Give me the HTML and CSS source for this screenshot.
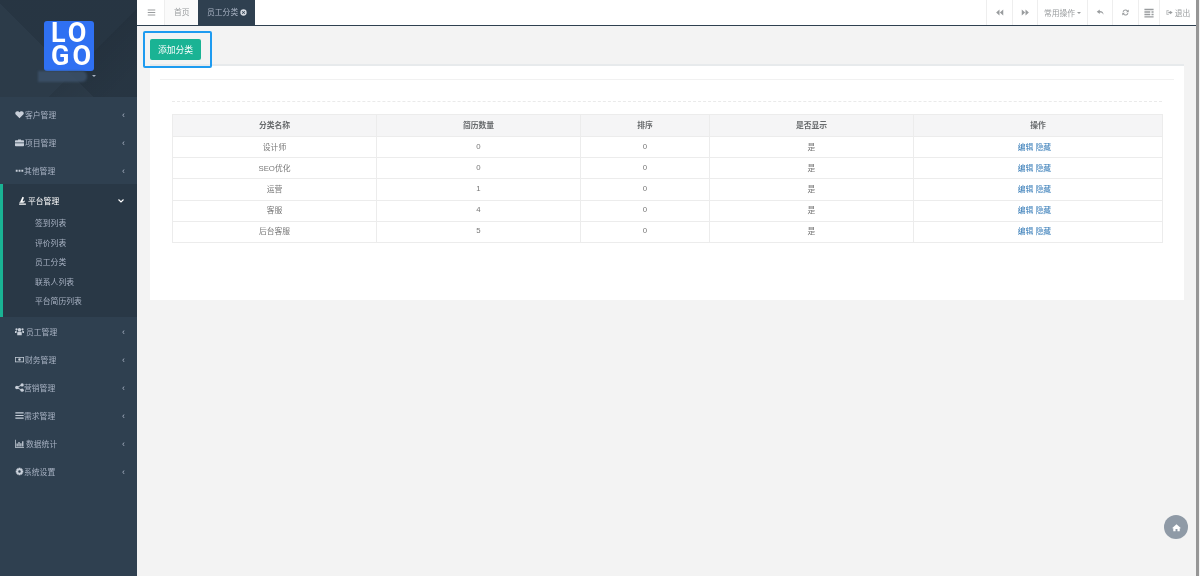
FILE: index.html
```html
<!DOCTYPE html>
<html lang="zh-CN">
<head>
<meta charset="utf-8">
<title>员工分类</title>
<link rel="stylesheet" href="styles.css">
</head>
<body>
<svg class="defs" width="0" height="0" aria-hidden="true">
  <symbol id="i-heart" viewBox="0 0 12 12"><path d="M6 11 1 6C-.5 4 .8 1.500 3.300 1.500 4.500 1.500 5.500 2.200 6 3c.5-.8 1.500-1.500 2.700-1.500C11.200 1.500 12.500 4 11 6z"/></symbol>
  <symbol id="i-case" viewBox="0 0 12 12"><path d="M4 3V2h4v1h3a1 1 0 0 1 1 1v2H0V4a1 1 0 0 1 1-1zM0 7h12v3a1 1 0 0 1-1 1H1a1 1 0 0 1-1-1z"/></symbol>
  <symbol id="i-dots" viewBox="0 0 12 12"><path d="M1 5h2.500v2.500H1zM4.800 5h2.500v2.500H4.800zM8.500 5H11v2.500H8.500z"/></symbol>
  <symbol id="i-flask" viewBox="0 0 12 12"><path d="M6 1l2 1-2 5c1 .3 2-.2 2.300-1.500C9.800 7 8.500 9 6.500 9H2V8l1-.5zM1.500 10h9v1.500h-9z"/></symbol>
  <symbol id="i-users" viewBox="0 0 12 12"><circle cx="6" cy="3.500" r="2.300"/><circle cx="2" cy="3" r="1.500"/><circle cx="10" cy="3" r="1.500"/><path d="M3 11V7.500C3 6.500 4 6 6 6s3 .5 3 1.500V11zM0 8V6c0-.8 1-1 2.500-1L2 8zM12 8V6c0-.8-1-1-2.500-1l.5 3z"/></symbol>
  <symbol id="i-money" viewBox="0 0 12 12"><path fill-rule="evenodd" d="M0 2.500h12v7H0zM1 3.500v5h10v-5zM6 4.300a1.700 1.700 0 1 1 0 3.400 1.700 1.700 0 0 1 0-3.400z"/></symbol>
  <symbol id="i-share" viewBox="0 0 12 12"><circle cx="2.500" cy="6" r="2.300"/><circle cx="9.500" cy="2.500" r="2.200"/><circle cx="9.500" cy="9.500" r="2.200"/><path d="M2 5.500 9 2l.5 1-7 3.500zM2 6.500 9 10l.5-1-7-3.500z"/></symbol>
  <symbol id="i-bars" viewBox="0 0 12 12"><path d="M.5 1.800h11v1.600H.5zM.5 5.200h11v1.600H.5zM.5 8.600h11v1.600H.5z"/></symbol>
  <symbol id="i-chart" viewBox="0 0 12 12"><path d="M0 1h1v9.500h11V11.500H0zM2 6h1.700v4H2zM4.500 4h1.700v6H4.500zM7 5.500h1.700V10H7zM9.500 3h1.700v7H9.500z"/></symbol>
  <symbol id="i-gear" viewBox="0 0 12 12"><path fill-rule="evenodd" d="M4.800 1h2.400l.3 1.400 1.300-.7 1.500 1.500-.7 1.300 1.400.3v2.400l-1.400.3.700 1.300-1.500 1.500-1.300-.7-.3 1.400H4.800l-.3-1.400-1.300.7-1.500-1.500.7-1.300L1 7.200V4.800l1.400-.3-.7-1.300 1.500-1.500 1.300.7zM6 4.300a1.700 1.700 0 1 0 0 3.400 1.700 1.700 0 0 0 0-3.400z"/></symbol>
  <symbol id="i-home" viewBox="0 0 12 12"><path d="M6 1.500 12 7h-1.700v4H7.300V8H4.700v3H1.700V7H0z"/></symbol>
</svg>

<aside class="sidebar">
  <div class="brand">
    <div class="logo"><span class="logo-text">LOGO</span></div>
    <div class="brand-name"><i></i><i></i><i></i><i></i></div>
    <b class="caret"></b>
  </div>
  <nav class="menu">
    <a class="item"><svg class="ic gap1"><use href="#i-heart"/></svg><span class="lbl">客户管理</span><em class="arr">‹</em></a>
    <a class="item"><svg class="ic gap1"><use href="#i-case"/></svg><span class="lbl">项目管理</span><em class="arr">‹</em></a>
    <a class="item"><svg class="ic"><use href="#i-dots"/></svg><span class="lbl">其他管理</span><em class="arr">‹</em></a>
    <div class="group">
      <a class="item active"><svg class="ic"><use href="#i-flask"/></svg><span class="lbl">平台管理</span><svg class="chev" viewBox="0 0 6 4"><path d="M.5.500 3 3 5.500.5" fill="none" stroke="#fff" stroke-width="1.100"/></svg></a>
      <a class="sub">签到列表</a>
      <a class="sub">评价列表</a>
      <a class="sub">员工分类</a>
      <a class="sub">联系人列表</a>
      <a class="sub">平台简历列表</a>
    </div>
    <a class="item"><svg class="ic gap2"><use href="#i-users"/></svg><span class="lbl">员工管理</span><em class="arr">‹</em></a>
    <a class="item"><svg class="ic gap1"><use href="#i-money"/></svg><span class="lbl">财务管理</span><em class="arr">‹</em></a>
    <a class="item"><svg class="ic"><use href="#i-share"/></svg><span class="lbl">营销管理</span><em class="arr">‹</em></a>
    <a class="item"><svg class="ic"><use href="#i-bars"/></svg><span class="lbl">需求管理</span><em class="arr">‹</em></a>
    <a class="item"><svg class="ic gap2"><use href="#i-chart"/></svg><span class="lbl">数据统计</span><em class="arr">‹</em></a>
    <a class="item"><svg class="ic"><use href="#i-gear"/></svg><span class="lbl">系统设置</span><em class="arr">‹</em></a>
  </nav>
</aside>

<main class="main">
  <header class="topbar">
    <button class="tool burger"><svg class="tic" viewBox="0 0 12 12"><path d="M1 2h10v1.200H1zM1 5.400h10v1.200H1zM1 8.800h10V10H1z"/></svg></button>
    <a class="tab">首页</a>
    <a class="tab current">员工分类<svg class="close" viewBox="0 0 10 10"><path fill-rule="evenodd" d="M5 .5a4.500 4.500 0 1 1 0 9 4.500 4.500 0 0 1 0-9zM3.500 2.700 2.700 3.500 4.200 5 2.700 6.500l.8.8L5 5.800l1.500 1.500.8-.8L5.800 5l1.500-1.500-.8-.8L5 4.200z"/></svg></a>
    <div class="spacer"></div>
    <button class="tool w26"><svg class="tic" viewBox="0 0 12 12"><path d="M6 2v8L1.500 6zM11 2v8L6.500 6z"/></svg></button>
    <button class="tool w25"><svg class="tic" viewBox="0 0 12 12"><path d="M1 2v8l4.500-4zM6 2v8l4.500-4z"/></svg></button>
    <button class="tool w50">常用操作<b class="mini-caret"></b></button>
    <button class="tool w25"><svg class="tic" viewBox="0 0 12 12"><path d="M5 2 1 5l4 3V6c2.500 0 4 .8 5 3 0-3-1.500-5-5-5z"/></svg></button>
    <button class="tool w26"><svg class="tic" viewBox="0 0 12 12"><path d="M6 2a4 4 0 0 1 3 1.300L10.300 2v3.700H6.700L8.100 4.300A2.700 2.700 0 0 0 3.400 5.300L2.100 5A4 4 0 0 1 6 2zM1.700 6.300h3.600L3.900 7.700a2.700 2.700 0 0 0 4.700-1l1.300.3A4 4 0 0 1 3 8.700L1.700 10z"/></svg></button>
    <button class="tool w21"><svg class="tic wide" viewBox="0 0 12 12"><path d="M.5 1h11v1.700H.5zM.5 4h7v1.700h-7zM9 4h2.500v1.700H9zM.5 7h7v1.700h-7zM9 7h2.500v1.700H9zM.5 10h11v1.500H.5z"/></svg></button>
    <button class="tool w37"><svg class="tic small" viewBox="0 0 12 12"><path d="M1 2h4v1.200H2.200v5.600H5V10H1zM7 3l4.500 3L7 9V7.300H4V4.700h3z"/></svg>退出</button>
  </header>

  <section class="content">
    <div class="actions">
      <button class="btn-add">添加分类</button>
      <span class="highlight"></span>
    </div>
    <div class="panel">
      <div class="rule-solid"></div>
      <div class="rule-dashed"></div>
      <table class="grid">
        <colgroup><col class="c1"><col class="c2"><col class="c3"><col class="c4"><col class="c5"></colgroup>
        <thead><tr><th>分类名称</th><th>简历数量</th><th>排序</th><th>是否显示</th><th>操作</th></tr></thead>
        <tbody>
          <tr><td>设计师</td><td>0</td><td>0</td><td>是</td><td class="ops"><a>编辑</a> <a>隐藏</a></td></tr>
          <tr><td>SEO优化</td><td>0</td><td>0</td><td>是</td><td class="ops"><a>编辑</a> <a>隐藏</a></td></tr>
          <tr><td>运营</td><td>1</td><td>0</td><td>是</td><td class="ops"><a>编辑</a> <a>隐藏</a></td></tr>
          <tr><td>客服</td><td>4</td><td>0</td><td>是</td><td class="ops"><a>编辑</a> <a>隐藏</a></td></tr>
          <tr><td>后台客服</td><td>5</td><td>0</td><td>是</td><td class="ops"><a>编辑</a> <a>隐藏</a></td></tr>
        </tbody>
      </table>
    </div>
    <a class="home-fab"><svg viewBox="0 0 12 12"><use href="#i-home"/></svg></a>
  </section>
</main>
<div class="rail"></div>
</body>
</html>
```

FILE: styles.css
```css
* { box-sizing: border-box; }
html, body { height: 100%; }
body {
  margin: 0;
  display: flex;
  height: 576px;
  overflow: hidden;
  background: #f3f3f3;
  font-family: "Liberation Sans", "Noto Sans CJK SC", sans-serif;
  font-size: 7.8px;
  color: #676a6c;
}
.defs { position: absolute; }
.sidebar, .main { filter: blur(.3px); }

/* sidebar */
.sidebar { width: 137px; flex: none; background: #2f4050; }
.brand {
  height: 97px;
  position: relative;
  padding: 21px 0 0 44px;
  background:
    linear-gradient(135deg, rgba(0,0,0,0) 62%, rgba(0,0,0,.07) 62%, rgba(0,0,0,0) 90%),
    linear-gradient(45deg, rgba(255,255,255,.015) 40%, rgba(0,0,0,.05) 40%),
    #293846;
}
.logo {
  width: 50px;
  height: 50px;
  border-radius: 3px;
  background: #2f70f2;
  padding: 1px 0 0 7px;
}
.logo-text {
  display: block;
  width: 47px;
  color: #fff;
  font: 700 27px/23px Roboto, "Liberation Sans", sans-serif;
  letter-spacing: 3px;
  word-break: break-all;
}
.brand-name {
  position: absolute;
  left: 38px;
  top: 71px;
  display: flex;
  height: 11px;
  filter: blur(1px);
}
.brand-name i { width: 12px; height: 11px; background: #3c5168; opacity: .85; }
.brand-name i:last-of-type { width: 13px; border-radius: 0 5px 5px 0; }
.caret {
  position: absolute;
  left: 92px;
  top: 75px;
  border: 2.5px solid transparent;
  border-top-color: #a7b1c2;
}
.menu { padding-top: 3px; }
.item {
  height: 28px;
  display: flex;
  align-items: center;
  padding: 0 12px 0 15px;
  color: #a7b1c2;
}
.ic { width: 9px; height: 9px; fill: #c8cfd9; flex: none; }
.gap1 { margin-right: 1px; }
.gap2 { margin-right: 2px; }
.lbl { flex: 1; white-space: nowrap; }
.arr { font-style: normal; font-size: 9px; line-height: 9px; color: #a7b1c2; padding-top: 3px; }
.group {
  height: 133px;
  padding-top: 2px;
  background: #293846;
  border-left: 3px solid #1ab394;
}
.item.active { color: #fff; padding-left: 15px; }
.item.active .ic { fill: #fff; margin-right: 1px; }
.chev { width: 6px; height: 4px; margin: 1px 1px 0 0; }
.sub {
  display: block;
  height: 19.5px;
  line-height: 19.5px;
  padding-left: 32px;
  color: #a7b1c2;
  white-space: nowrap;
}

/* main */
.main { flex: 1; min-width: 0; display: flex; flex-direction: column; position: relative; }
.topbar {
  height: 26px;
  flex: none;
  display: flex;
  background: #fff;
  border-bottom: 1px solid #2f4050;
  padding-left: 1px;
}
.spacer { flex: 1; }
.tool {
  border: 0;
  border-left: 1px solid #eee;
  background: #fff;
  padding: 0;
  height: 25px;
  display: flex;
  align-items: center;
  justify-content: center;
  font: 7.8px "Liberation Sans", "Noto Sans CJK SC", sans-serif;
  color: #999c9e;
  white-space: nowrap;
}
.burger { width: 26px; border-left: 0; }
.tab {
  height: 25px;
  line-height: 25px;
  padding: 0 9px;
  width: 34px;
  background: #fafafa;
  border-left: 1px solid #eee;
  color: #999c9e;
  white-space: nowrap;
}
.tab.current {
  width: 57px;
  background: #2f4050;
  color: #a7b1c2;
  border-left: 0;
  display: flex;
  align-items: center;
}
.close { width: 7px; height: 7px; fill: #d4d9e0; margin-left: 2px; flex: none; }
.tic { width: 9px; height: 9px; fill: #999c9e; }
.tic.wide { width: 10px; height: 10px; }
.tic.small { width: 7px; height: 7px; margin-right: 2px; }
.w21 { width: 21px; }
.w25 { width: 25px; }
.w26 { width: 26px; }
.w37 { width: 37px; }
.w50 { width: 50px; }
.mini-caret {
  border: 2px solid transparent;
  border-top-color: #999c9e;
  margin: 2px 0 0 2px;
}

.content { flex: 1; position: relative; padding: 13px 12px 0 13px; }
.actions { position: relative; height: 25px; }
.btn-add {
  display: block;
  width: 51px;
  height: 21px;
  border: 0;
  border-radius: 2px;
  background: #1ab394;
  color: #fff;
  font: 8.8px "Liberation Sans", "Noto Sans CJK SC", sans-serif;
  padding: 0;
}
.highlight {
  position: absolute;
  left: -7px;
  top: -8px;
  width: 69px;
  height: 37px;
  border: 2px solid #1e9bf0;
  border-radius: 2px;
}
.panel {
  height: 236px;
  background: #fff;
  border-top: 2px solid #e7eaec;
  padding: 13px 22px 0 22px;
}
.rule-solid { height: 1px; background: #f1f1f1; margin: 0 -12px; }
.rule-dashed { height: 0; border-top: 1px dashed #eaeaea; margin-top: 21px; }
.grid {
  width: 990px;
  margin-top: 12px;
  table-layout: fixed;
  border-collapse: collapse;
  text-align: center;
}
.c1, .c2, .c4 { width: 204px; }
.c3 { width: 129px; }
.c5 { width: 249px; }
.grid th, .grid td { border: 1px solid #ececec; padding: 0 0 2px; }
.grid th { height: 22px; background: #f5f5f6; font-weight: 700; color: #676a6c; padding-bottom: 3px; }
.grid td { height: 21.2px; color: #777; }
.grid td.ops { padding-right: 7px; }
.grid td a { color: #337ab7; }
.home-fab {
  position: absolute;
  right: 8px;
  top: 489px;
  width: 24px;
  height: 24px;
  border-radius: 50%;
  background: #8f9aa6;
  display: flex;
  align-items: center;
  justify-content: center;
}
.home-fab svg { width: 9px; height: 9px; fill: #fff; }
.rail { width: 4px; flex: none; background: #f3f3f3; position: relative; }
.rail::before { content: ""; position: absolute; left: 0; top: 0; bottom: 0; width: 3px; background: #969696; }
```
